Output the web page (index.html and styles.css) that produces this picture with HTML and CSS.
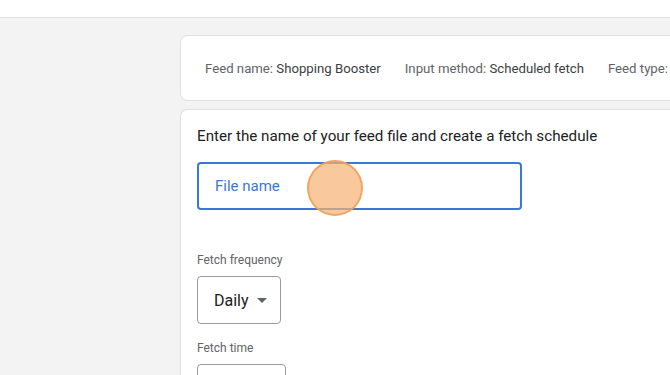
FILE: index.html
```html
<!DOCTYPE html>
<html lang="en">
<head>
    <meta charset="UTF-8">
    <title>Feed setup</title>
    <link rel="stylesheet" href="styles.css">
</head>
<body>
    <div class="topbar"></div>
    <div class="main">
        <div class="card summary">
            <span><span class="label">Feed name:</span> Shopping Booster</span>
            <span><span class="label">Input method:</span> Scheduled fetch</span>
            <span><span class="label">Feed type:</span></span>
        </div>
        <div class="card form">
            <h2>Enter the name of your feed file and create a fetch schedule</h2>
            <div class="input-wrap">
                <div class="file-input">File name</div>
                <div class="click"></div>
            </div>
            <div class="field-label first">Fetch frequency</div>
            <div class="select">Daily <span class="arrow"></span></div>
            <div class="field-label">Fetch time</div>
            <div class="select time"></div>
        </div>
    </div>
</body>
</html>
```

FILE: styles.css
```css
body {
    margin: 0;
    background: #f3f3f3;
    font-family: Roboto, "Liberation Sans", sans-serif;
    height: 375px;
    overflow: hidden;
}

.topbar {
    height: 17px;
    background: #fff;
    border-bottom: 1px solid #e3e3e3;
}

.main {
    height: 357px;
    box-sizing: border-box;
    padding: 17px 0 0 180px;
    display: flex;
    flex-direction: column;
    gap: 8px;
    overflow: hidden;
}

.card {
    background: #fff;
    border: 1px solid #e0e0e0;
    border-right: none;
    border-radius: 7px 0 0 7px;
}

.summary {
    height: 64px;
    flex-shrink: 0;
    display: flex;
    align-items: center;
    gap: 24px;
    padding-left: 24px;
    font-size: 13.2px;
    color: #3c4043;
    white-space: nowrap;
    overflow: hidden;
}

.label {
    color: #5f6368;
}

.form {
    flex: 1;
    min-height: 0;
    overflow: hidden;
    padding: 16px 16px 0 16px;
    border-bottom: none;
    border-radius: 7px 0 0 0;
}

h2 {
    margin: 0;
    font-size: 15.2px;
    font-weight: 400;
    color: #202124;
    line-height: 20px;
}

.input-wrap {
    position: relative;
    margin-top: 16px;
    width: 325px;
}

.file-input {
    height: 48px;
    border: 2px solid #3a78d6;
    border-radius: 4px;
    box-sizing: border-box;
    padding-left: 16px;
    display: flex;
    align-items: center;
    font-size: 15px;
    color: #3a78d6;
}

.click {
    position: absolute;
    left: 110px;
    top: -2px;
    width: 52px;
    height: 52px;
    border-radius: 50%;
    background: rgba(247, 178, 115, 0.7);
    border: 2px solid rgba(238, 160, 85, 0.85);
}

.field-label {
    font-size: 12px;
    color: #5f6368;
    margin-top: 17px;
    margin-bottom: 9px;
}

.field-label.first {
    margin-top: 43px;
}

.select {
    flex-shrink: 0;
    width: 84px;
    height: 48px;
    box-sizing: border-box;
    border: 1px solid #9a9a9a;
    border-radius: 4px;
    display: flex;
    align-items: center;
    padding-left: 16px;
    font-size: 16px;
    color: #202124;
    gap: 8px;
}

.arrow {
    width: 0;
    height: 0;
    border-left: 5px solid transparent;
    border-right: 5px solid transparent;
    border-top: 5px solid #5f6368;
}

.select.time {
    width: 89px;
}
```
